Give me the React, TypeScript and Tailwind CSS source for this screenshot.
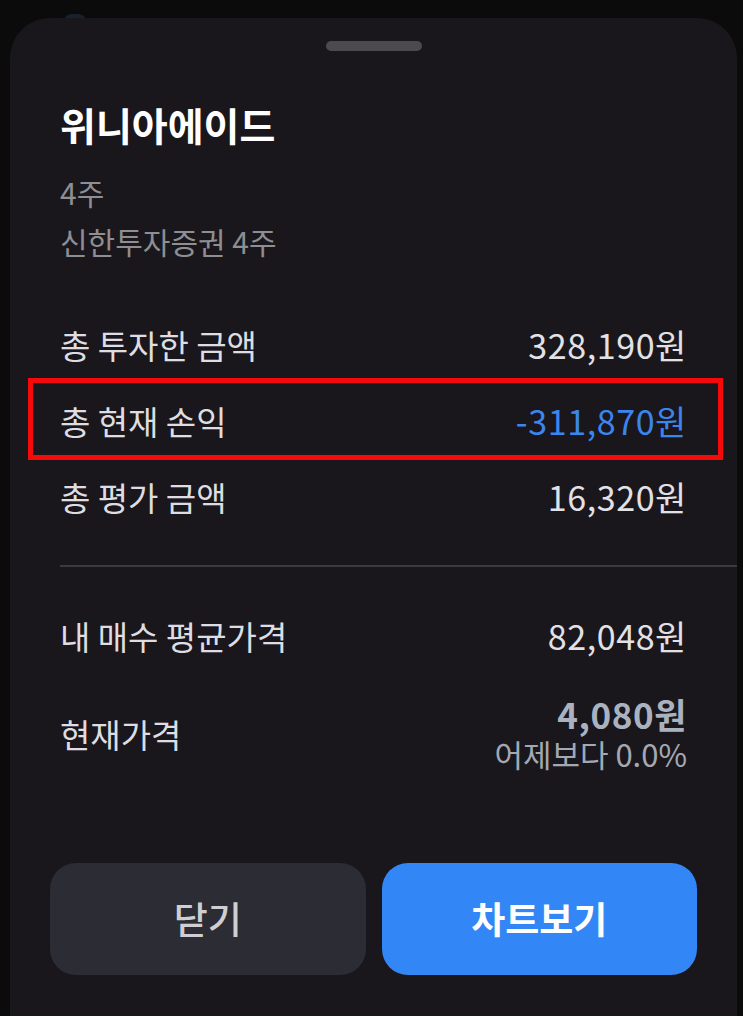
import React from "react";

const font = { fontFamily: '"Noto Sans CJK KR", "Noto Sans", sans-serif' };

function Row({ label, value, valueClass = "text-[#e2e2e6]" }: { label: string; value: string; valueClass?: string }) {
  return (
    <div className="flex h-[76px] items-center justify-between">
      <span className="text-[33px] leading-[44px] text-[#dedee2]">{label}</span>
      <span className={`text-[34px] leading-[44px] tracking-[0.6px] ${valueClass}`}>{value}</span>
    </div>
  );
}

export default function App() {
  return (
    <div className="relative h-[1016px] w-[743px] overflow-hidden bg-[#0b0b0c] pt-[18px] pl-[10px] pr-[6px]" style={font}>
      <div className="absolute left-[62px] top-[14px] h-[22px] w-[26px] rounded-full bg-[#16232e]" />
      <div className="relative h-[1040px] rounded-t-[40px] bg-[#1a171c]">
        <div className="pt-[23px]">
          <div className="mx-auto h-[10px] w-[96px] rounded-full bg-[#4b4a50]" />
        </div>
        <div className="px-[50px]">
          <div className="mt-[48px] text-[39px] font-bold leading-[50px] text-white">위니아에이드</div>
          <div className="mt-[23px] text-[30px] leading-[40px] text-[#8e8e93]">4주</div>
          <div className="mt-[9px] text-[30px] leading-[40px] text-[#8e8e93]">신한투자증권 4주</div>

          <div className="mt-[46px]">
            <Row label="총 투자한 금액" value="328,190원" />
            <div className="relative">
              <div className="pointer-events-none absolute -left-[32px] -right-[36px] -top-[5px] -bottom-[1px] border-[5px] border-[#f50a0a]" />
              <Row label="총 현재 손익" value="-311,870원" valueClass="text-[#3b86ee]" />
            </div>
            <Row label="총 평가 금액" value="16,320원" />
          </div>
        </div>

        <div className="ml-[50px] mt-[30px] h-[2px] bg-[#3a3a40]" />

        <div className="px-[50px]">
          <div className="mt-[31px]">
            <Row label="내 매수 평균가격" value="82,048원" />
          </div>
          <div className="mt-[20px] flex items-center justify-between">
            <span className="text-[33px] leading-[44px] text-[#dedee2]">현재가격</span>
            <div className="flex flex-col items-end">
              <span className="text-[35px] font-bold leading-[40px] tracking-[0.6px] text-[#aab2c0]">4,080원</span>
              <span className="text-[31px] leading-[40px] text-[#a3a9b4]">어제보다 0.0%</span>
            </div>
          </div>
        </div>

        <div className="mt-[89px] flex gap-[16px] px-[40px]">
          <button className="flex h-[112px] flex-1 items-center justify-center rounded-[26px] bg-[#2c2c34] text-[37px] font-medium text-[#cfcfd3]">
            닫기
          </button>
          <button className="flex h-[112px] flex-1 items-center justify-center rounded-[26px] bg-[#3386f5] text-[37px] font-semibold text-white">
            차트보기
          </button>
        </div>
      </div>
    </div>
  );
}
